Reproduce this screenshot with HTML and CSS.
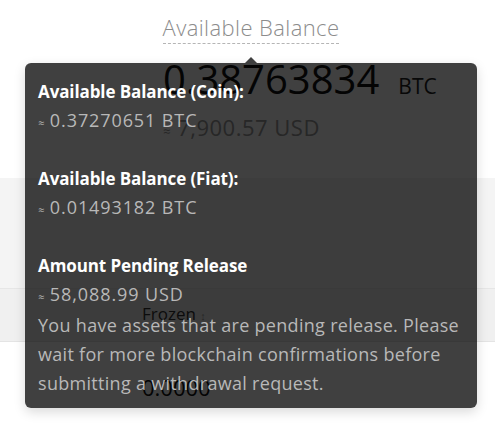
FILE: index.html
```html
<!DOCTYPE html>
<html>
<head>
<meta charset="utf-8">
<link rel="stylesheet" href="styles.css">
</head>
<body>
<div class="page">
  <section class="summary">
    <div class="label"><span class="dotted">Available Balance</span></div>
    <div class="figures">
      <div class="amount"><span class="big">0.38763834</span><span class="unit">BTC</span></div>
      <div class="fiat"><span class="approx-lg">≈</span> 7,900.57 USD</div>
    </div>
  </section>
  <section class="band"></section>
  <div class="table">
    <div class="thead"><span class="col">Frozen <span class="sort">↕</span></span></div>
    <div class="trow"><span class="col val">0.0000</span></div>
  </div>

  <div class="tooltip">
    <div class="tip-title">Available Balance (Coin):</div>
    <div class="tip-val num"><span class="approx">≈</span> 0.37270651 BTC</div>
    <div class="gap"></div>
    <div class="tip-title">Available Balance (Fiat):</div>
    <div class="tip-val num"><span class="approx">≈</span> 0.01493182 BTC</div>
    <div class="gap"></div>
    <div class="tip-title">Amount Pending Release</div>
    <div class="tip-val num"><span class="approx">≈</span> 58,088.99 USD</div>
    <div class="tip-val para">You have assets that are pending release. Please wait for more blockchain confirmations before submitting a withdrawal request.</div>
  </div>
</div>
</body>
</html>
```

FILE: styles.css
```css
html, body {
  margin: 0;
  padding: 0;
  background: #ffffff;
}
body {
  font-family: "Open Sans", "Noto Sans", sans-serif;
  width: 495px;
  height: 425px;
  overflow: hidden;
}
.page {
  position: relative;
  height: 425px;
}
.summary {
  height: 178px;
  display: flex;
  flex-direction: column;
  align-items: center;
  padding-top: 12px;
  box-sizing: border-box;
}
.label {
  font-size: 22px;
  font-weight: 300;
  letter-spacing: 0.4px;
  color: #8c8c8c;
  line-height: 30px;
  margin-left: 7px;
}
.dotted {
  border-bottom: 1px dashed #b5b5b5;
  padding-bottom: 1px;
}
.figures {
  align-self: flex-start;
  padding-left: 163px;
}
.amount {
  margin-top: 14px;
  display: flex;
  align-items: baseline;
  gap: 19px;
}
.big {
  font-size: 40px;
  color: #111;
  line-height: 46px;
}
.unit {
  font-size: 21px;
  color: #222;
}
.fiat {
  font-size: 22px;
  letter-spacing: 0.5px;
  color: #9a9a9a;
  margin-top: 10px;
  line-height: 30px;
}
.approx-lg {
  font-size: 13px;
}
.band {
  height: 110px;
  background: #f4f4f4;
  border-bottom: 1px solid #e6e6e6;
}
.thead {
  height: 53px;
  background: #f0f0f0;
  border-bottom: 1px solid #e4e4e4;
  display: flex;
  align-items: center;
  padding-bottom: 4px;
  box-sizing: border-box;
}
.col {
  padding-left: 142px;
  font-size: 17px;
  color: #333;
}
.sort {
  font-size: 11px;
  color: #999;
}
.trow {
  height: 84px;
  display: flex;
  align-items: center;
  padding-top: 6px;
  box-sizing: border-box;
}
.val {
  font-size: 22px;
  color: #111;
}
.tooltip {
  position: absolute;
  left: 25px;
  top: 63px;
  width: 452px;
  box-sizing: border-box;
  padding: 14px 10px 10px 13px;
  background: rgba(0, 0, 0, 0.75);
  border-radius: 6px;
  box-shadow: 0 4px 12px rgba(0, 0, 0, 0.15);
  font-size: 18px;
  line-height: 29px;
}
.tooltip::before {
  content: "";
  position: absolute;
  left: 220px;
  top: -6px;
  border-left: 6px solid transparent;
  border-right: 6px solid transparent;
  border-bottom: 6px solid rgba(0, 0, 0, 0.75);
}
.tip-title {
  color: #ffffff;
  font-weight: 700;
  font-size: 17px;
  letter-spacing: -0.1px;
}
.tip-val {
  color: #b8b8b8;
}
.num {
  letter-spacing: 0.9px;
}
.para {
  letter-spacing: 0.3px;
}
.approx {
  font-size: 11px;
  letter-spacing: 0;
}
.gap {
  height: 27px;
}
```
